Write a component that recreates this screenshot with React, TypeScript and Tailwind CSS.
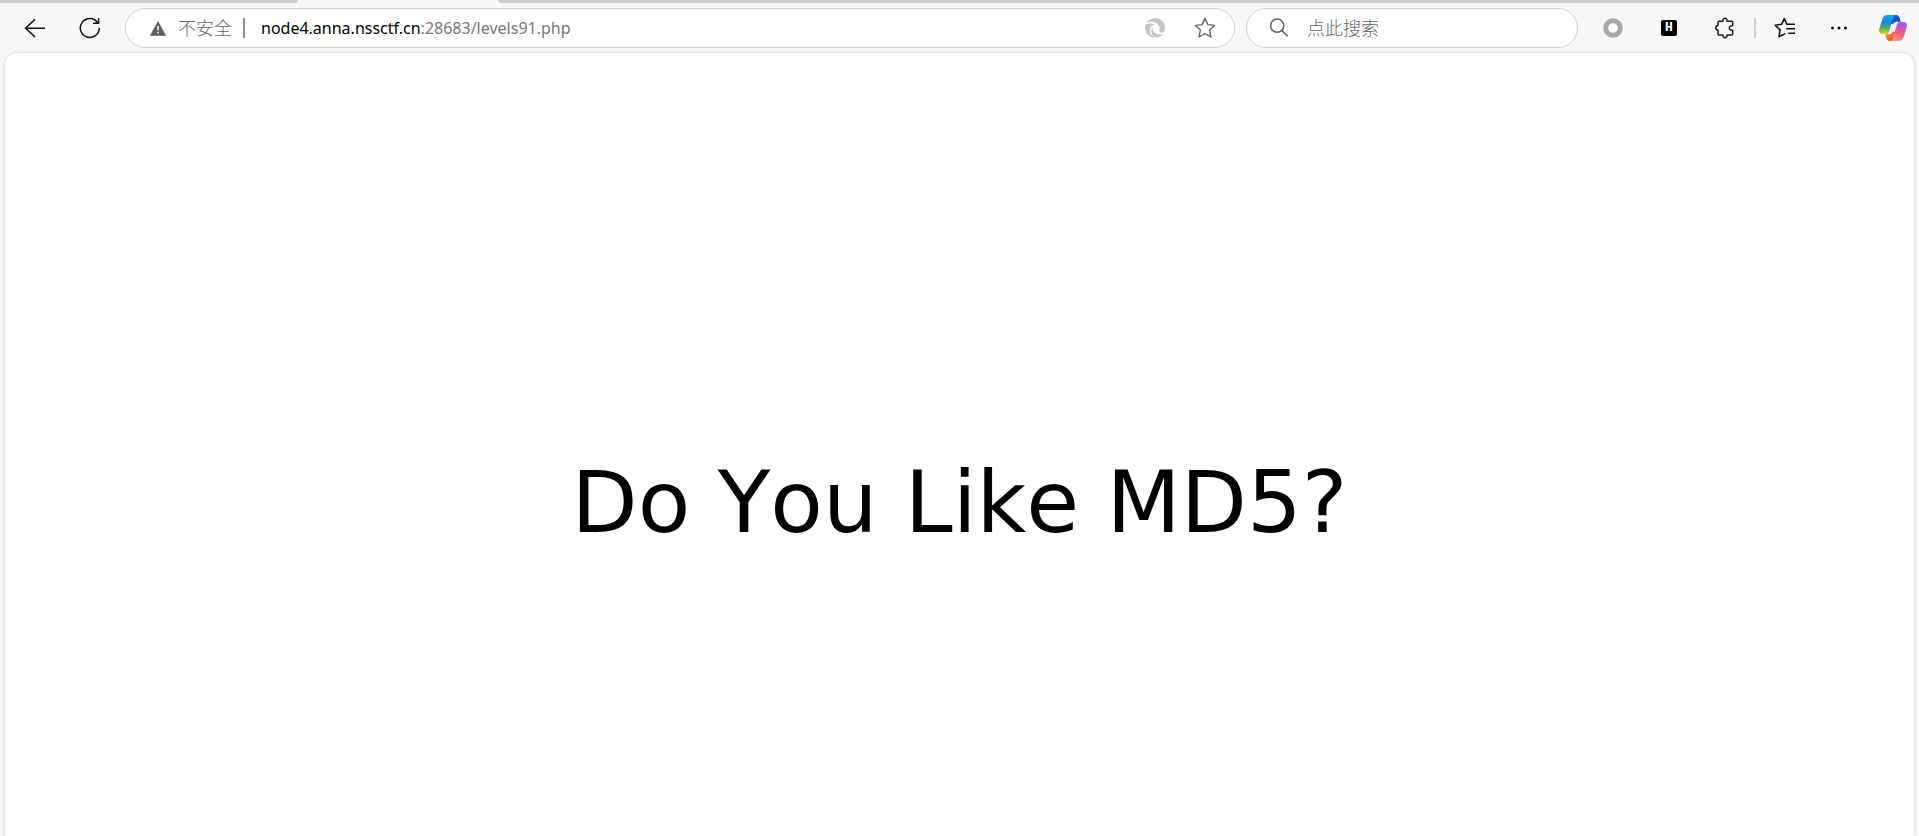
import React from "react";

function IconButton({ label, className, children }: { label: string; className?: string; children: React.ReactNode }) {
  return (
    <button type="button" aria-label={label} className={`flex size-8 shrink-0 items-center justify-center rounded ${className ?? ""}`}>
      {children}
    </button>
  );
}

function BackIcon() {
  return (
    <svg width="22" height="22" viewBox="0 0 22 22" fill="none" stroke="#111" strokeWidth="1.5">
      <path d="M21 11.3H1.8M11 2.2 1.6 11.3l9.4 8.6" />
    </svg>
  );
}

function ReloadIcon() {
  return (
    <svg width="22" height="22" viewBox="0 0 22 22" fill="none" stroke="#111" strokeWidth="1.5">
      <path d="M20.3 11A9.5 9.5 0 1 1 18.6 5.6M19.6 1.2V6.2H14" />
    </svg>
  );
}

function WarningIcon() {
  return (
    <svg width="16" height="15" viewBox="0 0 16 15">
      <path d="M8 .6 15.6 14.4H.4Z" fill="#5c5c5c" stroke="#5c5c5c" strokeWidth=".6" strokeLinejoin="round" />
      <path d="M8 5v4.4M8 10.7v1.7" stroke="#fff" strokeWidth="1.5" />
    </svg>
  );
}

function SwirlIcon() {
  return (
    <svg width="20" height="20" viewBox="0 0 20 20">
      <path
        d="M1.500 4.400C4 1 8 0 11.500.3 16.500.8 20 5 20 9.700c0 3-1.300 5-3.400 5-1.700 0-2.500-1-2.100-2.500C15.300 8.500 12.800 5 9 4.200 6.300 3.600 3.500 3.600 1.500 4.400Z"
        fill="#c4c4c4"
      />
      <path
        d="M.8 6.200C3.800 4.700 7.600 5 9.800 6.700 6.800 7 4.800 9.200 5 12.400c.2 3.400 2.500 6.200 6 7.400C4.900 20.300 0 15.600 0 10.300c0-1.500.3-2.900.8-4.100Z"
        fill="#c4c4c4"
      />
      <path
        d="M7.300 9.300c-.1 4.200 3.300 7.400 7.500 7.300 1.400 0 2.600-.4 3.700-1.100-1.400 2.300-3.500 3.700-5.500 3.900-3.900-.5-6.800-3.300-6.800-7 0-1.200.4-2.300 1.100-3.100Z"
        fill="#c4c4c4"
      />
    </svg>
  );
}

function StarIcon() {
  return (
    <svg width="22" height="22" viewBox="0 0 22 22" fill="none" stroke="#666" strokeWidth="1.4" strokeLinejoin="round">
      <path d="m11 1.400 2.900 6.200 6.700.8-5 4.700 1.400 6.900-6-3.400-6 3.400 1.400-6.900-5-4.700 6.700-.8Z" />
    </svg>
  );
}

function SearchIcon() {
  return (
    <svg width="20" height="20" viewBox="0 0 20 20" fill="none" stroke="#606060" strokeWidth="1.500">
      <circle cx="8.200" cy="7.700" r="6.600" />
      <path d="m12.900 12.500 5.700 5.700" />
    </svg>
  );
}

function RingIcon() {
  return (
    <svg width="20" height="20" viewBox="0 0 20 20">
      <circle cx="10" cy="10" r="7.300" fill="#fff" stroke="#a9a9a9" strokeWidth="5" />
    </svg>
  );
}

function PuzzleIcon() {
  return (
    <svg width="20" height="22" viewBox="0 0 20 22" fill="none" stroke="#1a1a1a" strokeWidth="1.500" strokeLinejoin="round">
      <path d="M4.200 4.300h3.700c-.5-4 4.600-4 4.100 0h4.500c.7 0 1.200.5 1.200 1.200v3.200c-4.600-.5-4.600 5 0 4.600v3.500c0 .7-.5 1.200-1.200 1.200H12c.5 3.700-4.600 3.700-4.100 0H4.200c-.7 0-1.200-.5-1.200-1.200v-3.700c-3-.3-3-4.300 0-4.600V5.500c0-.7.5-1.200 1.200-1.200Z" />
    </svg>
  );
}

function FavoritesIcon() {
  return (
    <svg width="22" height="22" viewBox="0 0 22 22" fill="none" stroke="#111" strokeWidth="1.600" strokeLinejoin="round">
      <path d="m14 7.300-1.200-.2-2.500-5.500-2.700 5.700-6.400.9 4.800 4.700-1 6.900 6.400-3.200" />
      <path d="M13.500 7.300H21M12.300 11.800H21M14.200 16.300H21" />
    </svg>
  );
}

function MoreIcon() {
  return (
    <svg width="18" height="6" viewBox="0 0 18 6" fill="#111">
      <circle cx="2.500" cy="3" r="1.500" />
      <circle cx="9" cy="3" r="1.500" />
      <circle cx="15.500" cy="3" r="1.500" />
    </svg>
  );
}

function CopilotIcon() {
  return (
    <svg width="28" height="28" viewBox="0 0 28 28">
      <defs>
        <linearGradient id="left" x1="0" y1="0" x2="0" y2="1">
          <stop offset="0" stopColor="#18a5ee" />
          <stop offset=".4" stopColor="#1685d8" />
          <stop offset=".7" stopColor="#4fb65c" />
          <stop offset="1" stopColor="#f5cf0b" />
        </linearGradient>
        <linearGradient id="right" x1=".7" y1="0" x2=".3" y2="1">
          <stop offset="0" stopColor="#9a55ee" />
          <stop offset=".5" stopColor="#ee5599" />
          <stop offset="1" stopColor="#ffa05c" />
        </linearGradient>
        <linearGradient id="top" x1="0" y1="0" x2="1" y2="1">
          <stop offset="0" stopColor="#1b6ddb" />
          <stop offset="1" stopColor="#123fc4" />
        </linearGradient>
        <linearGradient id="bottom" x1="0" y1="0" x2="1" y2="1">
          <stop offset="0" stopColor="#ff9a44" />
          <stop offset="1" stopColor="#e23d35" />
        </linearGradient>
      </defs>
      <path fill="url(#top)" d="M11 1h6.300c1.700 0 2.700 1 3.200 2.600l1.300 4.200h-4.400c-1.800 0-2.800.9-3.300 2.500L12 10Z" />
      <path fill="url(#bottom)" d="M17 27h-6.500c-1.800 0-2.600-1-3.100-2.700L6.200 20h4.300c1.700 0 2.700-1 3.200-2.600L16 18Z" />
      <path fill="url(#left)" d="M8.600 1h8c-1.500.3-2 1.300-2.500 2.900l-3.700 12.900c-.6 2.100-1.500 3.200-3.400 3.200H3.600C.6 20-.5 17.600.3 14.800L3.500 4.500C4.300 2 6 1 8.600 1Z" />
      <path fill="url(#right)" d="M19.400 27h-8c1.500-.3 2-1.300 2.500-2.900l3.700-12.900c.6-2.100 1.500-3.200 3.400-3.200h3.400c3 0 4.100 2.400 3.300 5.200l-3.200 10.300c-.8 2.500-2.500 3.500-5.100 3.500Z" />
    </svg>
  );
}

export default function App() {
  return (
    <div className="flex min-h-screen flex-col bg-[#f7f7f7] font-['Noto_Sans','Noto_Sans_CJK_SC',sans-serif]">
      <div className="flex h-[3px] gap-[200px]" aria-hidden="true">
        <div className="w-[298px] rounded-br-lg bg-[#cdcdcd]" />
        <div className="flex-1 rounded-bl-lg bg-[#cdcdcd]" />
      </div>

      <header className="flex items-center pt-[5px] pr-[10px] pb-[5px] pl-[19px] text-base leading-6">
        <IconButton label="返回"><BackIcon /></IconButton>
        <IconButton label="刷新" className="ml-[23px]"><ReloadIcon /></IconButton>

        <div className="ml-[19px] flex h-10 min-w-0 flex-1 items-center rounded-full border border-[#cfcfcf] bg-white pr-[13px] pl-6">
          <button type="button" className="flex shrink-0 items-center gap-3 text-lg leading-6 font-light text-[#666]">
            <WarningIcon />
            不安全
          </button>
          <div className="ml-[11px] h-5 w-[2px] shrink-0 bg-[#8f8f8f]" />
          <div
            role="textbox"
            aria-label="地址"
            contentEditable
            suppressContentEditableWarning
            spellCheck={false}
            className="ml-4 min-w-0 flex-1 overflow-hidden whitespace-nowrap text-[#777] outline-none"
          >
            <span className="text-black">node4.anna.nssctf.cn</span>:28683/levels91.php
          </div>
          <IconButton label="扩展助手" className="mr-[18px]"><SwirlIcon /></IconButton>
          <IconButton label="收藏此页"><StarIcon /></IconButton>
        </div>

        <label className="ml-[11px] flex h-10 w-[332px] shrink-0 items-center gap-[18px] rounded-full border border-[#cfcfcf] bg-white px-[22px]">
          <SearchIcon />
          <input
            type="search"
            aria-label="点此搜索"
            placeholder="点此搜索"
            className="min-w-0 flex-1 bg-transparent text-lg leading-6 font-light outline-none placeholder:text-[#666]"
          />
        </label>

        <div className="ml-[19px] flex shrink-0 items-center gap-6">
          <IconButton label="圆环"><RingIcon /></IconButton>
          <IconButton label="HackBar">
            <span className="flex size-4 items-center justify-center rounded-[2px] bg-black font-['Liberation_Mono',monospace] text-[13px] leading-4 font-bold text-white">H</span>
          </IconButton>
          <IconButton label="扩展"><PuzzleIcon /></IconButton>
        </div>
        <div className="ml-[13px] h-5 w-[2px] shrink-0 bg-[#cdcdcd]" />
        <div className="ml-[13px] flex shrink-0 items-center gap-[22px]">
          <IconButton label="收藏夹"><FavoritesIcon /></IconButton>
          <IconButton label="设置及其他"><MoreIcon /></IconButton>
          <IconButton label="Copilot"><CopilotIcon /></IconButton>
        </div>
      </header>

      <main className="mx-[5px] flex flex-1 items-start justify-center rounded-t-xl bg-white pt-[387px] shadow-[0_0_3px_#00000033]">
        <h1 className="font-['DejaVu_Sans',sans-serif] text-[86px] leading-[124px] whitespace-nowrap text-black [font-kerning:none]">Do You Like MD5?</h1>
      </main>
    </div>
  );
}
